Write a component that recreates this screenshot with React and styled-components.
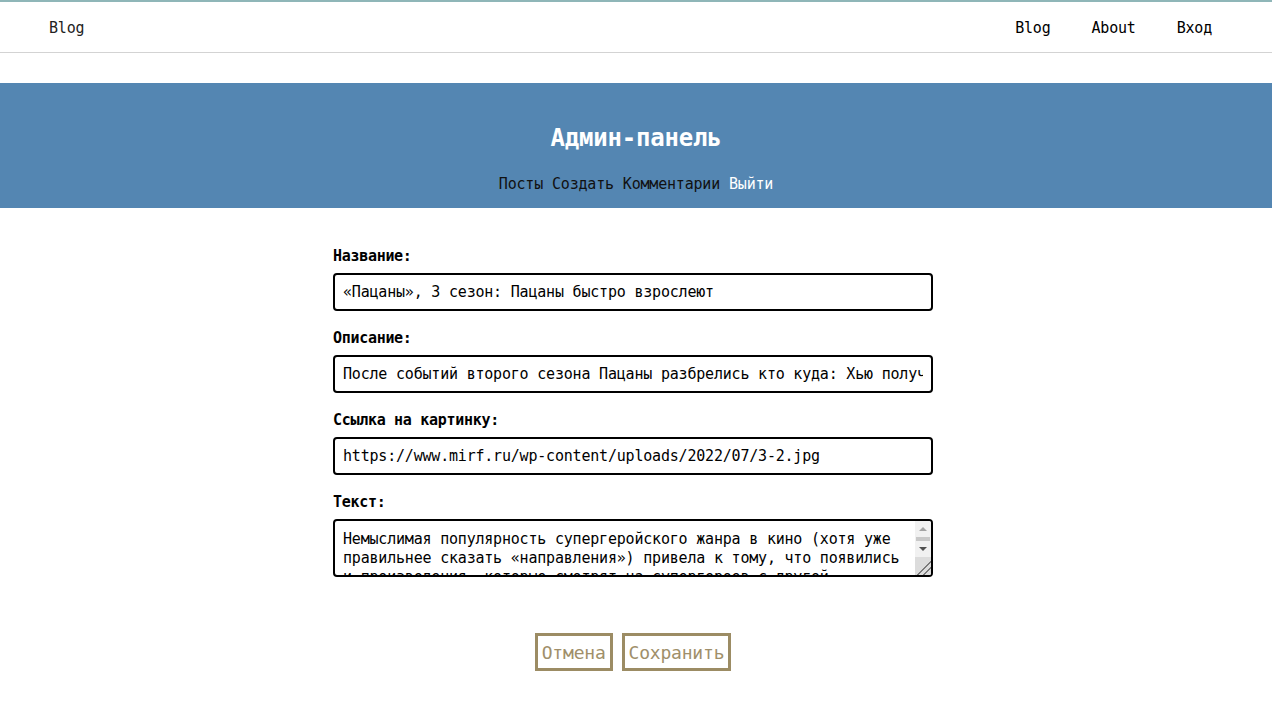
import styled, { createGlobalStyle } from "styled-components";

const GlobalStyle = createGlobalStyle`
  html, body {
    margin: 0;
    padding: 0;
    background: #fff;
  }
  body {
    font-family: "DejaVu Sans Mono", "Liberation Mono", monospace;
    font-size: 15px;
    letter-spacing: -0.2px;
    color: #000;
  }
  * {
    box-sizing: border-box;
  }
`;

const Navbar = styled.nav`
  display: flex;
  align-items: center;
  justify-content: space-between;
  height: 53px;
  padding: 1px 60px 0 49px;
  border-top: 2px solid #8fb6b8;
  border-bottom: 1px solid #d3d3d3;
`;

const Brand = styled.a`
  color: #222;
  text-decoration: none;
`;

const NavLinks = styled.div`
  display: flex;
  gap: 41px;
`;

const NavLink = styled.a`
  color: #000;
  text-decoration: none;
`;

const Banner = styled.header`
  margin-top: 30px;
  height: 125px;
  background: #5486b2;
  display: flex;
  flex-direction: column;
  align-items: center;
  padding-top: 40px;
`;

const Title = styled.h1`
  margin: 0;
  font-size: 24px;
  line-height: 30px;
  font-weight: bold;
  color: #fff;
`;

const AdminLinks = styled.div`
  margin-top: 22px;
  display: flex;
  gap: 9px;
`;

const AdminLink = styled.a`
  color: ${(p) => (p.$light ? "#fff" : "#111")};
  text-decoration: none;
`;

const Form = styled.form`
  width: 600px;
  margin: 0 0 0 calc(50% - 303px);
  padding-top: 39px;
  display: flex;
  flex-direction: column;
`;

const Field = styled.div`
  display: flex;
  flex-direction: column;
  gap: 7px;
  margin-bottom: 18px;
`;

const Label = styled.label`
  font-weight: bold;
  line-height: 19px;
  font-size: 15px;
  letter-spacing: -0.3px;
`;

const Input = styled.input`
  height: 38px;
  width: 100%;
  padding: 0 8px;
  border: 2px solid #000;
  border-radius: 4px;
  font-family: inherit;
  font-size: 15px;
  letter-spacing: -0.2px;
  color: #000;
  outline: none;
`;

const TextAreaWrap = styled.div`
  position: relative;
  height: 58px;
`;

const TextArea = styled.textarea`
  display: block;
  height: 58px;
  width: 100%;
  padding: 9px 25px 8px 8px;
  border: 2px solid #000;
  border-radius: 4px;
  font-family: inherit;
  font-size: 15px;
  line-height: 19px;
  letter-spacing: -0.2px;
  color: #000;
  outline: none;
  resize: none;
  overflow: hidden;
`;

/* drawn scrollbar, sits over the textarea's right edge */
const Scrollbar = styled.div`
  position: absolute;
  top: 2px;
  right: 2px;
  bottom: 2px;
  width: 16px;
  background: #f1f1f1;
  border-radius: 0 2px 2px 0;
  display: flex;
  flex-direction: column;
  overflow: hidden;
`;

const ScrollButton = styled.div`
  height: 16px;
  display: flex;
  align-items: center;
  justify-content: center;
  &::before {
    content: "";
    border-left: 4px solid transparent;
    border-right: 4px solid transparent;
    ${(p) =>
      p.$down
        ? "border-top: 4px solid #505050;"
        : "border-bottom: 4px solid #a3a3a3;"}
  }
`;

const Thumb = styled.div`
  height: 4px;
  margin: 0 1px;
  background: #c8c8c8;
`;

const Corner = styled.div`
  flex: 1;
  background-color: #dcdcdc;
  background-image: linear-gradient(
    135deg,
    transparent 58%,
    #7a7a7a 58%,
    #7a7a7a 64%,
    transparent 64%,
    transparent 76%,
    #7a7a7a 76%,
    #7a7a7a 82%,
    transparent 82%
  );
`;

const Actions = styled.div`
  display: flex;
  justify-content: center;
  gap: 9px;
  margin-top: 38px;
`;

const Button = styled.button`
  height: 38px;
  padding: 0 4px;
  border: 3px solid #9c8c64;
  background: #fff;
  color: #a08f6a;
  font-family: inherit;
  font-size: 18px;
  letter-spacing: -0.2px;
  cursor: pointer;
`;

const text =
  "Немыслимая популярность супергеройского жанра в кино (хотя уже правильнее сказать «направления») привела к тому, что появились и произведения, которые смотрят на супергероев с другой стороны. «Пацаны» — один из самых ярких примеров такого взгляда.";

export default function App() {
  return (
    <>
      <GlobalStyle />
      <Navbar>
        <Brand href="#">Blog</Brand>
        <NavLinks>
          <NavLink href="#">Blog</NavLink>
          <NavLink href="#">About</NavLink>
          <NavLink href="#">Вход</NavLink>
        </NavLinks>
      </Navbar>
      <Banner>
        <Title>Админ-панель</Title>
        <AdminLinks>
          <AdminLink href="#">Посты</AdminLink>
          <AdminLink href="#">Создать</AdminLink>
          <AdminLink href="#">Комментарии</AdminLink>
          <AdminLink href="#" $light>
            Выйти
          </AdminLink>
        </AdminLinks>
      </Banner>
      <Form onSubmit={(e) => e.preventDefault()}>
        <Field>
          <Label>Название:</Label>
          <Input defaultValue="«Пацаны», 3 сезон: Пацаны быстро взрослеют" />
        </Field>
        <Field>
          <Label>Описание:</Label>
          <Input defaultValue="После событий второго сезона Пацаны разбрелись кто куда: Хью получил работу в правительстве" />
        </Field>
        <Field>
          <Label>Ссылка на картинку:</Label>
          <Input defaultValue="https://www.mirf.ru/wp-content/uploads/2022/07/3-2.jpg" />
        </Field>
        <Field>
          <Label>Текст:</Label>
          <TextAreaWrap>
            <TextArea defaultValue={text} />
            <Scrollbar>
              <ScrollButton />
              <Thumb />
              <ScrollButton $down />
              <Corner />
            </Scrollbar>
          </TextAreaWrap>
        </Field>
        <Actions>
          <Button type="button">Отмена</Button>
          <Button type="submit">Сохранить</Button>
        </Actions>
      </Form>
    </>
  );
}
